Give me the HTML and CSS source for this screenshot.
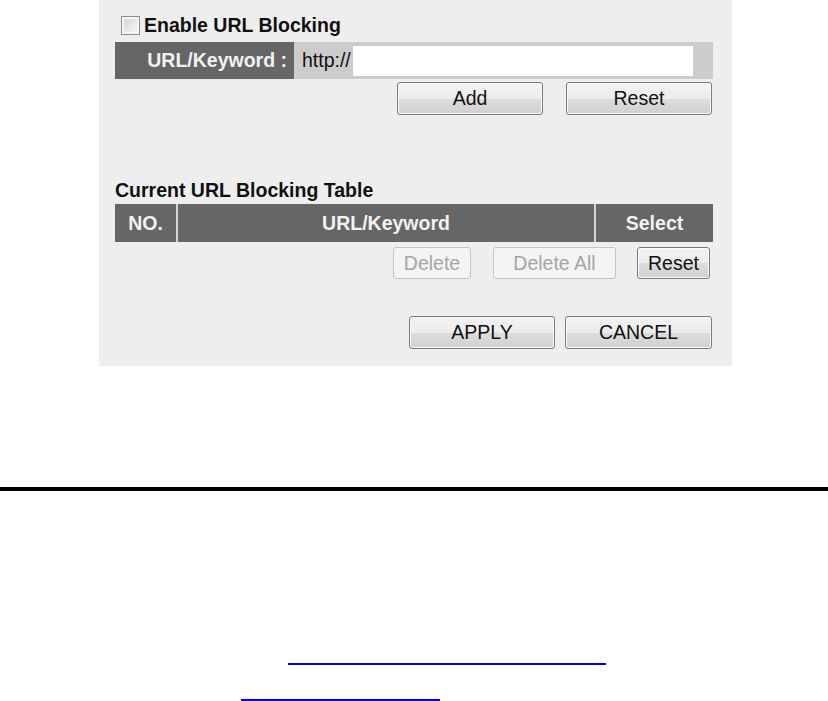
FILE: index.html
```html
<!DOCTYPE html>
<html>
	<head>
		<meta charset="utf-8">
		<title>URL Blocking</title>
		<link rel="stylesheet" href="styles.css">
	</head>
	<body>
		<div class="panel">
			<label class="enable">
				<input type="checkbox" class="check">
				<span>Enable URL Blocking</span>
			</label>
			<div class="url-row">
				<div class="url-label">URL/Keyword :</div>
				<div class="url-field">
					<span class="prefix">http://</span>
					<input type="text" class="url-input">
				</div>
			</div>
			<div class="actions">
				<button class="btn wide">Add</button>
				<button class="btn wide">Reset</button>
			</div>
			<h2 class="table-title">Current URL Blocking Table</h2>
			<div class="table-head">
				<div class="col-no">NO.</div>
				<div class="col-url">URL/Keyword</div>
				<div class="col-sel">Select</div>
			</div>
			<div class="actions table-actions">
				<button class="btn delete" disabled>Delete</button>
				<button class="btn delete-all" disabled>Delete All</button>
				<button class="btn small">Reset</button>
			</div>
			<div class="actions footer">
				<button class="btn wide">APPLY</button>
				<button class="btn wide">CANCEL</button>
			</div>
		</div>
		<hr class="rule">
		<a class="link link-one" href="#"></a>
		<a class="link link-two" href="#"></a>
	</body>
</html>
```

FILE: styles.css
```css
* {
	margin: 0;
	padding: 0;
	box-sizing: border-box;
}
body {
	font-family: "Liberation Sans", Arial, sans-serif;
	font-size: 19.5px;
	line-height: 19px;
	color: #111;
	background: #fff;
}
.panel {
	width: 633px;
	height: 366px;
	margin-left: 99px;
	padding: 16px 19px 0 16px;
	background: #eeeeee;
}
.enable {
	display: flex;
	align-items: center;
	height: 19px;
	margin-bottom: 7px;
	font-weight: bold;
}
.check {
	appearance: none;
	width: 19px;
	height: 19px;
	margin: 0 4px 0 6px;
	border: 1px solid #8e8e8e;
	box-shadow: inset 0 0 0 2px #f6f6f6;
	background: linear-gradient(135deg, #d4d4d4, #f8f8f8);
}
.url-row {
	display: flex;
	height: 37px;
}
.url-label {
	width: 179px;
	background: #666666;
	color: #f2f2f2;
	font-weight: bold;
	text-align: right;
	padding-right: 7px;
	line-height: 37px;
}
.url-field {
	flex: 1;
	display: flex;
	align-items: center;
	background: #cccccc;
	padding-left: 8px;
}
.prefix {
	width: 51px;
}
.url-input {
	width: 340px;
	height: 30px;
	border: none;
	background: #fff;
	outline: none;
}
.actions {
	display: flex;
	justify-content: flex-end;
	gap: 23px;
	margin-top: 3px;
	padding-right: 1px;
}
.btn {
	font-family: inherit;
	font-size: 19.5px;
	color: #111;
	height: 33px;
	border: 1px solid #7a7a7a;
	border-radius: 3px;
	box-shadow: inset 0 0 0 1px #fbfbfb;
	background: linear-gradient(#f3f3f3 0%, #ebebeb 50%, #dddddd 51%, #d0d0d0 100%);
}
.wide {
	width: 146px;
}
.table-title {
	font-size: 19.5px;
	line-height: 19px;
	margin-top: 66px;
	margin-bottom: 4px;
}
.table-head {
	display: flex;
	gap: 2px;
	height: 38px;
	background: #d4d4d4;
	color: #f2f2f2;
	font-weight: bold;
	line-height: 38px;
	text-align: center;
}
.table-head div {
	background: #666666;
}
.col-no {
	width: 61px;
}
.col-url {
	flex: 1;
}
.col-sel {
	width: 117px;
}
.table-actions {
	margin-top: 5px;
	gap: 21px;
	padding-right: 3px;
}
.table-actions .btn {
	height: 32px;
}
.btn:disabled {
	color: #a5a5a5;
	border-color: #c3c3c3;
	background: #f4f4f4;
	box-shadow: none;
}
.delete {
	width: 78px;
	margin-right: 1px;
}
.delete-all {
	width: 123px;
}
.small {
	width: 73px;
}
.footer {
	margin-top: 37px;
	gap: 10px;
}
.footer .btn:last-child {
	width: 147px;
}
.rule {
	border: none;
	height: 4px;
	margin-top: 121px;
	background: #000;
}
.link {
	display: block;
	height: 2px;
	background: #0000ff;
}
.link-one {
	width: 318px;
	margin: 172px 0 0 288px;
}
.link-two {
	width: 199px;
	margin: 34px 0 0 241px;
}
```
